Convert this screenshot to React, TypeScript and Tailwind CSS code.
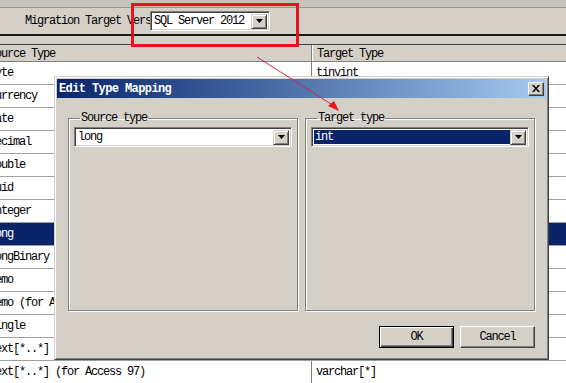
import React from 'react';

const rows: [string, string][] = [
  ['Byte', 'tinyint'],
  ['Currency', 'money'],
  ['Date', 'datetime'],
  ['Decimal', 'decimal'],
  ['Double', 'float'],
  ['Guid', 'uniqueidentifier'],
  ['Integer', 'smallint'],
  ['Long', 'int'],
  ['LongBinary', 'image'],
  ['Memo', 'nvarchar(max)'],
  ['Memo (for Access 97)', 'varchar(max)'],
  ['Single', 'real'],
  ['Text[*..*]', 'nvarchar[*]'],
  ['Text[*..*] (for Access 97)', 'varchar[*]'],
];

const font = { fontFamily: '"Liberation Mono", "DejaVu Sans Mono", monospace' };

const DropArrow = () => (
  <div className="w-[16px] h-[15px] bg-[#d4d0c8] border border-[#404040] border-t-[#d4d0c8] border-l-[#d4d0c8] shadow-[inset_1px_1px_#fff,inset_-1px_-1px_#808080] flex items-center justify-center">
    <svg width="7" height="4" viewBox="0 0 7 4">
      <path d="M0 0h7L3.5 4z" fill="#000" />
    </svg>
  </div>
);

const Combo = ({ value, selected, width }: { value: string; selected?: boolean; width: string }) => (
  <div className={`${width} h-[20px] bg-white border border-[#808080] border-r-[#fff] border-b-[#fff] shadow-[inset_1px_1px_#404040,inset_-1px_-1px_#d4d0c8] flex items-center p-[2px]`}>
    <div className={`flex-1 h-full flex items-center pl-[1px] ${selected ? 'bg-[#0a246a] text-white' : 'text-black'}`}>{value}</div>
    <DropArrow />
  </div>
);

const GroupBox = ({ title, children }: { title: string; children: React.ReactNode }) => (
  <fieldset className="w-[230px] h-[199px] border border-[#808080] shadow-[inset_1px_1px_#fff,1px_1px_#fff] px-[5px] pt-[3px]">
    <legend className="ml-[6px] px-[1px] leading-[12px]">{title}</legend>
    {children}
  </fieldset>
);

const Button = ({ label, isDefault }: { label: string; isDefault?: boolean }) => (
  <button
    className={`w-[75px] h-[22px] bg-[#d4d0c8] flex items-center justify-center ${
      isDefault
        ? 'border border-black shadow-[inset_1px_1px_#fff,inset_-1px_-1px_#404040,inset_-2px_-2px_#808080]'
        : 'border border-[#404040] border-t-[#fff] border-l-[#fff] shadow-[inset_-1px_-1px_#808080]'
    }`}
  >
    {label}
  </button>
);

export default function App() {
  return (
    <div className="relative w-[566px] h-[383px] overflow-hidden bg-white text-[12px] tracking-[-1.2px] text-black" style={font}>
      {/* window chrome */}
      <div className="h-[8px] bg-[#c6c3bc] border-b border-[#9a978f]" />
      <div className="h-[26px] bg-[#d4d0c8] flex items-center pl-[25px]">
        <div className="w-[125px] overflow-hidden whitespace-nowrap">Migration Target Version:</div>
        <Combo value="SQL Server 2012" width="w-[120px]" />
      </div>
      <div className="h-[2px] bg-[#1a1a1a]" />
      <div className="h-[9px] bg-[#d4d0c8] border-b border-[#404040]" />

      {/* grid */}
      <div className="flex h-[17px] bg-[#d4d0c8] border-b border-[#808080]">
        <div className="w-[326px] -ml-[14px] pl-[3px] pt-[2px] border-r border-[#808080] flex items-center">Source Type</div>
        <div className="flex-1 pl-[4px] pt-[2px] flex items-center border-l border-white">Target Type</div>
      </div>
      {rows.map(([src, tgt], i) => {
        const sel = i === 7;
        return (
          <div key={i} className="flex h-[23px] border-b border-[#a0a0a0]">
            <div className={`w-[326px] -ml-[14px] pl-[3px] flex items-center whitespace-nowrap border-r border-[#808080] ${sel ? 'bg-[#0a246a] text-white' : ''}`}>{src}</div>
            <div className={`flex-1 pl-[4px] flex items-center whitespace-nowrap ${sel ? 'bg-[#0a246a] text-white' : ''}`}>{tgt}</div>
          </div>
        );
      })}

      {/* dialog */}
      <div className="absolute left-[54px] top-[76px] w-[495px] h-[284px] bg-[#d4d0c8] border border-[#404040] border-t-[#d4d0c8] border-l-[#d4d0c8] shadow-[inset_1px_1px_#fff,inset_-1px_-1px_#808080] p-[2px] flex flex-col">
        <div className="h-[19px] bg-gradient-to-r from-[#0a246a] to-[#a6caf0] flex items-center justify-between pl-[2px] pr-[2px]">
          <span className="text-white font-bold tracking-[-0.6px]">Edit Type Mapping</span>
          <div className="w-[16px] h-[14px] bg-[#d4d0c8] border border-[#404040] border-t-white border-l-white shadow-[inset_-1px_-1px_#808080] flex items-center justify-center">
            <svg width="8" height="7" viewBox="0 0 8 7">
              <path d="M0 0h2l2 2.5L6 0h2L5 3.5 8 7H6L4 4.5 2 7H0l3-3.5z" fill="#000" />
            </svg>
          </div>
        </div>
        <div className="flex gap-[7px] pl-[11px] mt-[14px]">
          <GroupBox title="Source type">
            <Combo value="long" width="w-[218px]" />
          </GroupBox>
          <GroupBox title="Target type">
            <Combo value="int" selected width="w-[218px]" />
          </GroupBox>
        </div>
        <div className="flex justify-end gap-[6px] pr-[11px] mt-[15px]">
          <Button label="OK" isDefault />
          <Button label="Cancel" />
        </div>
      </div>

      {/* annotation */}
      <div className="absolute left-[131px] top-[3px] w-[168px] h-[44px] border-[3px] border-[#e5151b]" />
      <svg className="absolute left-0 top-0" width="566" height="383" viewBox="0 0 566 383">
        <line x1="257" y1="57" x2="334" y2="106" stroke="#c42a4a" strokeWidth="1" />
        <path d="M339 111 L328 106 L334 101 Z" fill="#e5151b" />
      </svg>
    </div>
  );
}
